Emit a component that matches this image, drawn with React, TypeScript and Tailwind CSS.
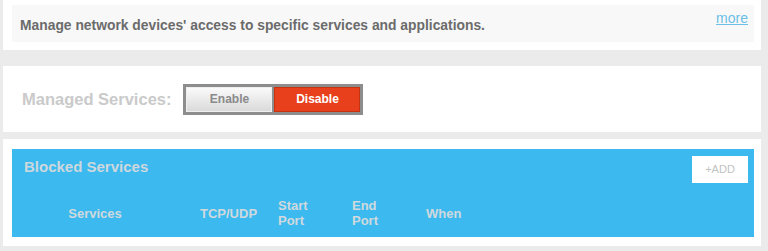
export default function App() {
  return (
    <div className="w-[768px] h-[251px] bg-[#ebebeb] pl-[3px] pr-[7px] font-['Liberation_Sans',Arial,sans-serif] overflow-hidden">
      {/* intro card */}
      <section className="bg-white h-[50px] pt-[5px] pl-[9px] pr-[7px]">
        <div className="bg-[#f8f8f8] h-[37px] flex justify-between pl-[8px] pr-[6px]">
          <p className="text-[13.85px] font-bold text-[#6b6b6b] leading-[16px] pt-[12px]">
            Manage network devices' access to specific services and applications.
          </p>
          <a href="#" className="text-[14px] text-[#6cbfe6] underline leading-[16px] pt-[5px]">
            more
          </a>
        </div>
      </section>

      {/* managed services toggle */}
      <section className="bg-white h-[66px] mt-[16px] flex items-center pl-[19px]">
        <span className="text-[16.5px] font-bold text-[#cacaca] mr-[12px]">Managed Services:</span>
        <div className="flex gap-[2px] bg-[#8d8d8d] p-[3px]">
          <button className="w-[86px] h-[25px] text-[12px] font-bold text-[#8a8a8a] bg-[linear-gradient(#fafafa,#dadada)] border border-[#eeeeee]">
            Enable
          </button>
          <button className="w-[86px] h-[25px] text-[12px] font-bold text-white bg-[#e8401c] border border-[#c8330f]">
            Disable
          </button>
        </div>
      </section>

      {/* blocked services table */}
      <section className="bg-white h-[107px] mt-[7px] pt-[10px] pl-[9px] pr-[7px]">
        <div className="bg-[#3cb9ee] h-[88px] pt-[7px]">
          <div className="flex justify-between items-start pl-[12px] pr-[6px] h-[27px]">
            <h2 className="text-[15px] font-bold text-[#cdd8de] leading-[16px] pt-[3px]">Blocked Services</h2>
            <button className="w-[56px] h-[27px] bg-white text-[11px] text-[#c2c2c2]">+ADD</button>
          </div>
          <div className="flex items-center mt-[15px] h-[30px] text-[13px] font-bold text-[#cfd9de] leading-[15px]">
            <span className="w-[166px] text-center">Services</span>
            <span className="w-[100px] pl-[22px]">TCP/UDP</span>
            <span className="w-[74px]">
              Start
              <br />
              Port
            </span>
            <span className="w-[74px]">
              End
              <br />
              Port
            </span>
            <span>When</span>
          </div>
        </div>
      </section>
    </div>
  );
}
